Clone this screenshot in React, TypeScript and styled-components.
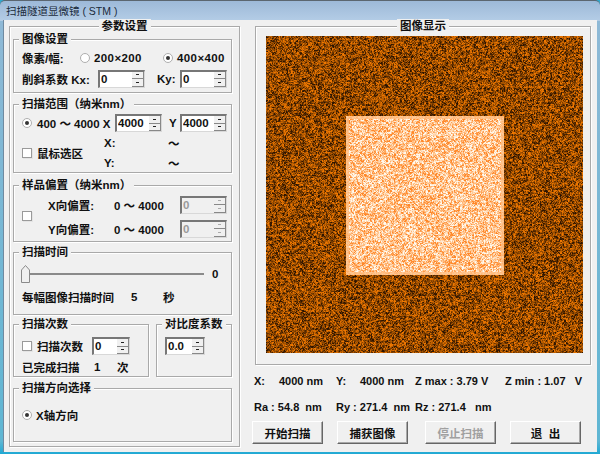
import React, { useEffect, useRef } from "react";
import styled, { createGlobalStyle } from "styled-components";

const Global = createGlobalStyle`
  html, body { margin: 0; padding: 0; background: #2fa8cf; }
  * { box-sizing: border-box; }
`;
const Win = styled.div`
  width: 600px; height: 454px; display: flex; flex-direction: column; overflow: hidden;
  font: 700 11.5px "Liberation Sans", "Noto Sans CJK SC", sans-serif; color: #111;
  background: linear-gradient(180deg, #9db9d8 0, #b4cde6 20px, #8fb9d6 20px, #5fb6d3 440px, #1fa9d4 100%);
  border-radius: 5px 5px 0 0; border-top: 1px solid #5b6670;
`;
const Title = styled.div`
  height: 19px; padding: 3px 0 0 6px; font-weight: 400; font-size: 10.5px; line-height: 15px; color: #1a2a3a;
`;
const Client = styled.div`
  width: 594px; height: 432px; margin-left: 3px; background: #f0f0f0; flex: none;
  display: flex; padding: 6px 0 0 5px; border-left: 1px solid #6f8aa0;
`;
const Group = styled.div<{ $h: number; $w?: number; $mb?: number; $pad?: string }>`
  position: relative; height: ${p => p.$h}px; ${p => (p.$w ? `width:${p.$w}px;` : "")}
  margin-bottom: ${p => p.$mb ?? 0}px; padding: ${p => p.$pad ?? "0"}; flex: none;
  border: 1px solid #a9a9a9; box-shadow: 1px 1px 0 #fff, inset 1px 1px 0 #fff;
`;
const Legend = styled.span<{ $center?: boolean }>`
  position: absolute; top: -8px; line-height: 15px; background: #f0f0f0; padding: 0 3px; white-space: nowrap;
  ${p => (p.$center ? "left: 50%; transform: translateX(-50%);" : "left: 5px;")}
`;
const LeftOuter = styled(Group)`
  width: 231px; padding: 12px 7px 0 3px; margin-right: 15px;
`;
const RightCol = styled.div`
  width: 336px; display: flex; flex-direction: column;
`;
const ImagePanel = styled(Group)`
  padding: 9px 0 0 10px;
`;
const Stm = styled.canvas`
  display: block; width: 317px; height: 317px;
`;
const Row = styled.div<{ $h?: number; $pl?: number }>`
  display: flex; align-items: center; height: ${p => p.$h ?? 20}px; padding-left: ${p => p.$pl ?? 0}px; white-space: nowrap;
`;
const PairRow = styled.div`
  display: flex; height: 53px; margin-bottom: 11px; gap: 7px;
`;
const Column = styled.div<{ $ml?: number }>`
  display: flex; flex-direction: column; margin-left: ${p => p.$ml ?? 0}px;
`;
const OffsetGroup = styled(Group)`
  display: flex; align-items: center;
`;
const Cell = styled.span<{ $w?: number; $ml?: number }>`
  display: inline-block; flex: none; ${p => (p.$w ? `width:${p.$w}px;` : "")} margin-left: ${p => p.$ml ?? 0}px;
`;
const Size = styled(Cell)`letter-spacing: .4px;`;
const Radio = styled.span<{ $on?: boolean; $ml?: number }>`
  flex: none; width: 10px; height: 10px; border-radius: 50%; border: 1px solid #aeaeae; background: #fff;
  margin-left: ${p => p.$ml ?? 0}px; display: inline-flex; align-items: center; justify-content: center;
  &::after { content: ""; width: 4px; height: 4px; border-radius: 50%; background: ${p => (p.$on ? "#333" : "transparent")}; }
`;
const Check = styled.span<{ $mt?: number }>`
  flex: none; width: 10px; height: 10px; background: #fff; border: 1px solid #9a9a9a; margin-top: ${p => p.$mt ?? 0}px;
  box-shadow: 1px 1px 0 #e4e4e4;
`;
const Spin = styled.div<{ $w: number; $ml?: number; $dis?: boolean }>`
  flex: none; width: ${p => p.$w}px; height: 18px; margin-left: ${p => p.$ml ?? 0}px; display: flex;
  background: ${p => (p.$dis ? "#f0f0f0" : "#fff")}; color: ${p => (p.$dis ? "#9a9a9a" : "#111")};
  border: 1px solid #d8d8d8; border-top: 2px solid #777; border-left: 2px solid #777; line-height: 15px; padding-left: 1px;
`;
const SpinVal = styled.span`flex: 1; overflow: hidden;`;
const SpinBtns = styled.div`
  width: 12px; height: 100%; display: flex; flex-direction: column; background: #f0f0f0;
`;
const SpinBtn = styled.div<{ $dis?: boolean }>`
  flex: 1; display: flex; align-items: center; justify-content: center; border-bottom: 1px solid #888; border-right: 1px solid #888;
  &::after { content: ""; width: 3px; height: 1px; background: ${p => (p.$dis ? "#aaa" : "#222")}; }
`;
const Slider = styled.div`
  display: flex; align-items: center; height: 20px; margin: 4px 0 0 -1px; position: relative;
`;
const Track = styled.div`
  width: 174px; height: 2px; background: #8a8a8a; margin-left: 9px;
`;
const Thumb = styled.svg`
  position: absolute; left: 0; top: 1px;
`;
const Info = styled.div<{ $mt: number }>`
  display: flex; align-items: center; height: 14px; margin: ${p => p.$mt}px 0 0 -1px; white-space: nowrap; font-size: 11px;
`;
const Buttons = styled.div`
  display: flex; gap: 14px; margin: 7px 0 0 -3px;
`;
const Btn = styled.button<{ $dis?: boolean; $ml?: number }>`
  width: 71px; height: 23px; padding: 0; background: #f0f0f0; font: inherit; margin-left: ${p => p.$ml ?? 0}px;
  color: ${p => (p.$dis ? "#a0a0a0" : "#111")};
  border: 1px solid; border-color: #fff #666 #666 #fff; box-shadow: inset -1px -1px 0 #a8a8a8;
`;

function NoiseImage() {
  const ref = useRef<HTMLCanvasElement>(null);
  useEffect(() => {
    const c = ref.current!;
    const ctx = c.getContext("2d")!;
    const N = 317;
    const img = ctx.createImageData(N, N);
    let s = 987654;
    const r = () => ((s = (s * 1664525 + 1013904223) >>> 0), s / 4294967296);
    const M = (N >> 1) + 2;
    const coarse = new Float32Array(M * M).map(() => r());
    const lerp = (a: number[], b: number[], t: number) => a.map((v, i) => v + (b[i] - v) * t);
    for (let y = 0; y < N; y++)
      for (let x = 0; x < N; x++) {
        const inner = x >= 80 && x < 238 && y >= 80 && y < 239;
        const t = 0.4 * coarse[(y >> 1) * M + (x >> 1)] + 0.6 * r();
        let rgb: number[];
        if (inner) {
          const edge = x < 83 || x >= 235 || y < 83 || y >= 236;
          const w = edge ? 0.3 + t * 0.3 : Math.min(1, Math.max(0, (t - 0.18) * 1.55));
          rgb = w < 0.5 ? lerp([255, 135, 40], [255, 198, 145], w * 2) : lerp([255, 198, 145], [255, 250, 240], (w - 0.5) * 2);
        } else {
          const w = Math.min(1, Math.max(0, (t - 0.14) * 1.4));
          rgb = w < 0.5 ? lerp([45, 20, 0], [150, 75, 0], w * 2) : lerp([150, 75, 0], [240, 120, 0], (w - 0.5) * 2);
        }
        const i = (y * N + x) * 4;
        img.data[i] = rgb[0];
        img.data[i + 1] = rgb[1];
        img.data[i + 2] = rgb[2];
        img.data[i + 3] = 255;
      }
    ctx.putImageData(img, 0, 0);
  }, []);
  return <Stm ref={ref} width={317} height={317} />;
}

const SpinBox = ({ v, w, ml, dis }: { v: string; w: number; ml?: number; dis?: boolean }) => (
  <Spin $w={w} $ml={ml} $dis={dis}>
    <SpinVal>{v}</SpinVal>
    <SpinBtns>
      <SpinBtn $dis={dis} />
      <SpinBtn $dis={dis} />
    </SpinBtns>
  </Spin>
);

export default function App() {
  return (
    <Win>
      <Global />
      <Title>扫描隧道显微镜 ( STM )</Title>
      <Client>
        <LeftOuter $h={421}>
          <Legend $center>参数设置</Legend>
          <Group $h={54} $mb={11} $pad="8px 0 0 8px">
            <Legend>图像设置</Legend>
            <Row $h={20}>
              <Cell $w={58}>像素/幅:</Cell>
              <Radio />
              <Size $ml={4} $w={49}>200×200</Size>
              <Radio $on $ml={20} />
              <Size $ml={4}>400×400</Size>
            </Row>
            <Row $h={21}>
              <Cell $w={76}>削斜系数 Kx:</Cell>
              <SpinBox v="0" w={47} />
              <Cell $ml={12} $w={23}>Ky:</Cell>
              <SpinBox v="0" w={47} />
            </Row>
          </Group>
          <Group $h={69} $mb={12} $pad="8px 0 0 8px">
            <Legend>扫描范围（纳米nm）</Legend>
            <Row $h={20}>
              <Radio $on />
              <Cell $ml={5} $w={78}>400 ～ 4000 X</Cell>
              <SpinBox v="4000" w={47} />
              <Cell $ml={7} $w={11}>Y</Cell>
              <SpinBox v="4000" w={47} />
            </Row>
            <Row $h={40}>
              <Check />
              <Cell $ml={5} $w={67}>鼠标选区</Cell>
              <Column>
                <Row $h={20}><Cell $w={64}>X:</Cell>～</Row>
                <Row $h={20}><Cell $w={64}>Y:</Cell>～</Row>
              </Column>
            </Row>
          </Group>
          <OffsetGroup $h={57} $mb={10} $pad="6px 0 0 8px">
            <Legend>样品偏置（纳米nm）</Legend>
            <Check $mt={-2} />
            <Column>
              <Row $h={24} $pl={16}>
                <Cell $w={66}>X向偏置:</Cell><Cell $w={66}>0 ～ 4000</Cell>
                <SpinBox v="0" w={47} dis />
              </Row>
              <Row $h={24} $pl={16}>
                <Cell $w={66}>Y向偏置:</Cell><Cell $w={66}>0 ～ 4000</Cell>
                <SpinBox v="0" w={47} dis />
              </Row>
            </Column>
          </OffsetGroup>
          <Group $h={63} $mb={9} $pad="7px 0 0 8px">
            <Legend>扫描时间</Legend>
            <Slider>
              <Thumb width="10" height="19" viewBox="0 0 10 19">
                <path d="M.5 17.5V5L4.5.5 8.5 5v12.5z" fill="#f0f0f0" stroke="#8a8a8a" />
              </Thumb>
              <Track />
              <Cell $ml={8}>0</Cell>
            </Slider>
            <Row $h={26}>
              <Cell $w={109}>每幅图像扫描时间</Cell>
              <Cell $w={32}>5</Cell>
              <Cell>秒</Cell>
            </Row>
          </Group>
          <PairRow>
            <Group $h={53} $w={136} $pad="11px 0 0 8px">
              <Legend>扫描次数</Legend>
              <Row $h={20}>
                <Check />
                <Cell $ml={5} $w={55}>扫描次数</Cell>
                <SpinBox v="0" w={38} />
              </Row>
              <Row $h={22}>
                <Cell $w={72}>已完成扫描</Cell>
                <Cell $w={23}>1</Cell>
                <Cell>次</Cell>
              </Row>
            </Group>
            <Group $h={53} $w={76} $pad="11px 0 0 8px">
              <Legend>对比度系数</Legend>
              <Row $h={20}><SpinBox v="0.0" w={40} /></Row>
            </Group>
          </PairRow>
          <Group $h={54} $pad="16px 0 0 8px">
            <Legend>扫描方向选择</Legend>
            <Row $h={20}>
              <Radio $on />
              <Cell $ml={4}>X轴方向</Cell>
            </Row>
          </Group>
        </LeftOuter>
        <RightCol>
          <ImagePanel $h={339}>
            <Legend $center>图像显示</Legend>
            <NoiseImage />
          </ImagePanel>
          <Info $mt={9}>
            <Cell $w={25}>X:</Cell><Cell $w={57}>4000 nm</Cell>
            <Cell $w={24}>Y:</Cell><Cell $w={55}>4000 nm</Cell>
            <Cell $w={90}>Z max : 3.79 V</Cell><Cell>Z min : 1.07&nbsp;&nbsp; V</Cell>
          </Info>
          <Info $mt={12}>
            <Cell $w={82}>Ra : 54.8&nbsp; nm</Cell>
            <Cell $w={79}>Ry : 271.4&nbsp; nm</Cell>
            <Cell>Rz : 271.4&nbsp;&nbsp; nm</Cell>
          </Info>
          <Buttons>
            <Btn>开始扫描</Btn>
            <Btn>捕获图像</Btn>
            <Btn $dis $ml={3}>停止扫描</Btn>
            <Btn>退&nbsp;&nbsp;出</Btn>
          </Buttons>
        </RightCol>
      </Client>
    </Win>
  );
}
